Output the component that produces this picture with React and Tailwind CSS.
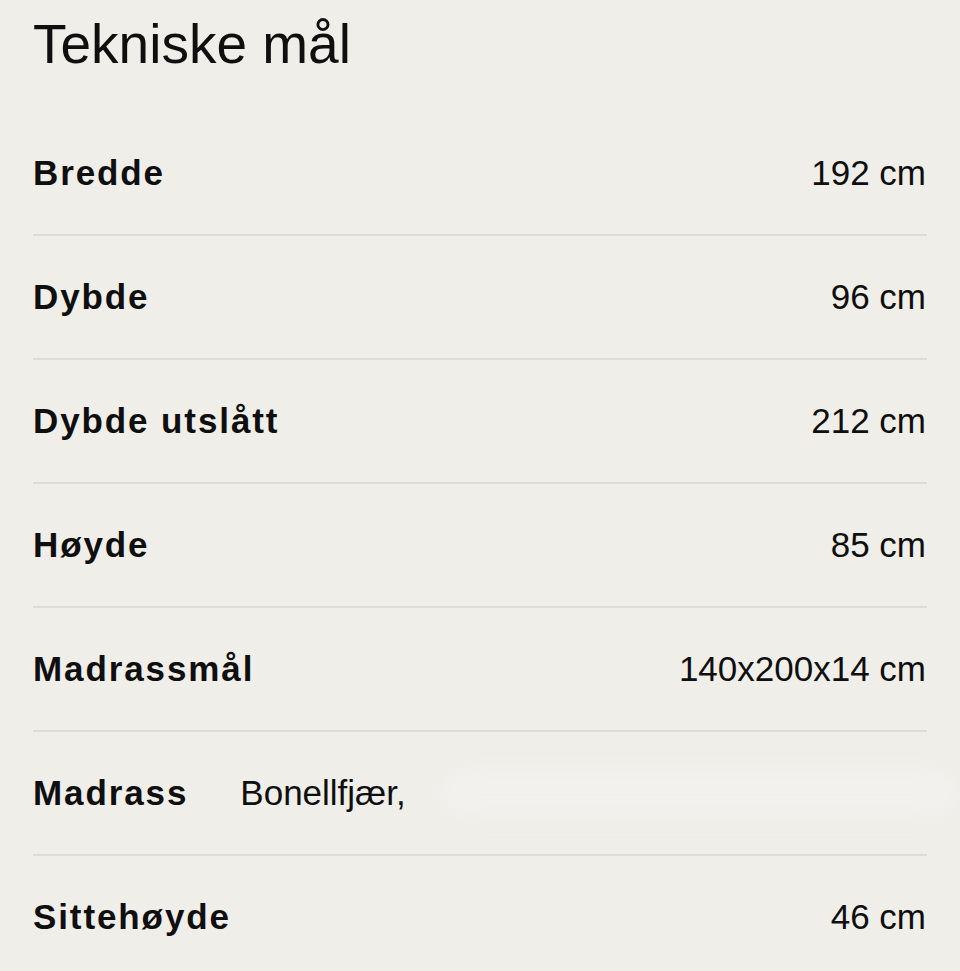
import React from 'react';

const rows = [
  { label: 'Bredde', value: '192 cm' },
  { label: 'Dybde', value: '96 cm' },
  { label: 'Dybde utslått', value: '212 cm' },
  { label: 'Høyde', value: '85 cm' },
  { label: 'Madrassmål', value: '140x200x14 cm' },
  { label: 'Madrass', inline: 'Bonellfjær,' },
  { label: 'Sittehøyde', value: '46 cm' },
];

const Row = ({ label, value, inline }) => (
  <div className="flex h-[124px] items-center justify-between border-b-2 border-[#dddcd7]">
    <div className="flex items-center">
      <span className="text-[35px] font-bold tracking-[1.9px] text-[#0f0f0f]">{label}</span>
      {inline && (
        <span className="ml-[52px] text-[35px] text-[#0f0f0f]">{inline}</span>
      )}
    </div>
    {inline ? (
      <div className="h-[50px] flex-1 ml-8 -mr-[33px] rounded-full bg-[#f2f1ed] blur-md"></div>
    ) : (
      <span className="pr-[1px] text-[35px] text-[#0f0f0f]">{value}</span>
    )}
  </div>
);

export default function App() {
  return (
    <div
      className="min-h-[971px] w-[960px] overflow-hidden bg-[#efeee9] px-[33px]"
      style={{ fontFamily: '"Liberation Sans", Arial, sans-serif' }}
    >
      <div className="flex h-[112px] items-start pt-[14px]">
        <h1 className="text-[55px] font-normal leading-[1.1] text-[#0f0f0f]">Tekniske mål</h1>
      </div>
      {rows.map((r) => (
        <Row key={r.label} {...r} />
      ))}
    </div>
  );
}
